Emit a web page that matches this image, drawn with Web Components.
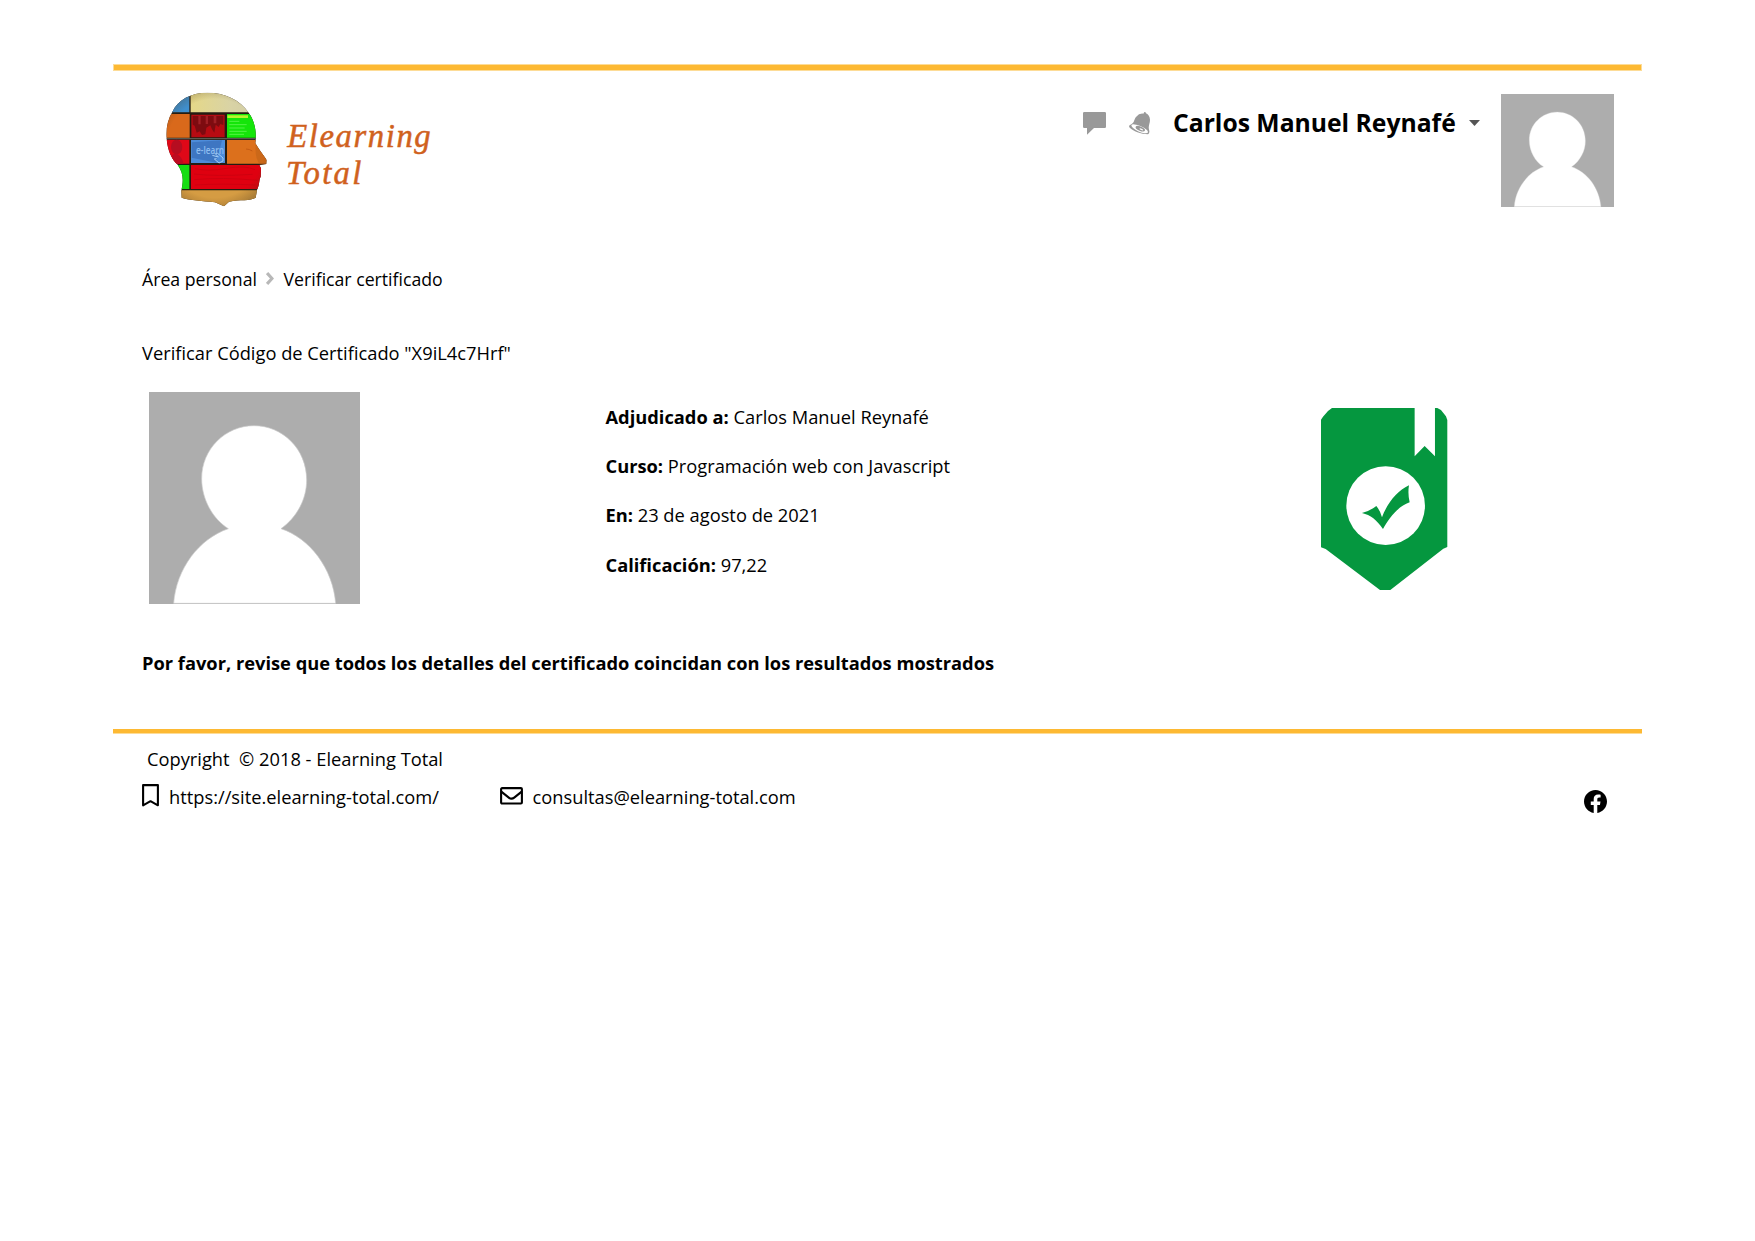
<!DOCTYPE html>
<html lang="es">
<head>
<meta charset="utf-8">
<title>Verificar certificado</title>
<style>
body{margin:0;background:#fff;color:#000;font:18.3px/26px "Open Sans",sans-serif}
</style>
</head>
<body>
<certificate-page></certificate-page>
<script>
function define(name, html){
  const t=document.createElement('template');
  t.innerHTML=html;
  customElements.define(name,class extends HTMLElement{
    constructor(){super();this.attachShadow({mode:'open'}).append(t.content.cloneNode(true));}
  });
}

define('brand-logo',`<style>:host{display:block;width:290px;height:140px}svg{display:block}text{font-family:"Liberation Serif",serif;font-style:italic}</style>
<svg width="290" height="140" viewBox="0 0 870 420">
<defs><clipPath id="h"><path d="M172 38C122 38 84 60 68 94C52 120 47 150 50 178C53 208 62 235 84 256C100 280 101 300 94 332L95 353C120 362 160 362 195 367L222 379L237 365C270 357 300 364 317 353L321 330C330 310 326 300 332 290L333 265L328 256L349 252L350 240C338 222 324 205 316 190C321 150 312 120 296 98C270 60 225 38 172 38Z"/></clipPath>
<radialGradient id="s" gradientUnits="userSpaceOnUse" cx="195" cy="205" r="185"><stop offset=".8" stop-color="#5a3a10" stop-opacity="0"/><stop offset="1" stop-color="#4a3a20" stop-opacity=".3"/></radialGradient>
<linearGradient id="c" x1="0" x2="1"><stop stop-color="#e5d888"/><stop offset=".5" stop-color="#d9d3a5"/><stop offset="1" stop-color="#cdc9a6"/></linearGradient></defs>
<g clip-path="url(#h)">
<path fill="#241c12" d="M40 30H360V390H40z"/>
<path fill="#3f8fce" d="M40 30H118V97H40z"/><path fill="url(#c)" d="M122 30H360V97H122z"/>
<path fill="#d9691b" d="M40 102H119V173H40z"/><path fill="#b70b12" d="M124 104H224V172H124z"/>
<path fill="#7d0b10" d="M128 108H220V135L211 132L206 141L197 134L193 158L186 148L181 136L169 143L166 163L156 165L149 154L140 158L134 137L128 134z"/>
<path fill="#a02025" d="M145 108h7v25h-7zM167 108h7v24h-7zM191 108h8v22h-8z"/>
<path fill="#15e50a" d="M231 102H340V173H231z"/><path fill="#b9f32e" d="M232 106H294V114H232z"/>
<g fill="none" stroke="#55f344" stroke-width="3"><path d="M238 124h30M238 134h52M238 144h46M238 154h52M238 163h44"/></g>
<path fill="#df0818" d="M40 179H118V251H40z"/><ellipse cx="80" cy="201" rx="17" ry="22" fill="#b60d20"/><path fill="#bd0b20" d="M58 251Q60 224 77 220Q94 226 101 251z"/>
<path fill="#4d8cda" d="M123 180H225V249H123z"/><path fill="#3e76c2" d="M125 187L216 181L199 248L125 233z"/>
<path fill="none" stroke="#a4cdf4" stroke-width="3" d="M187 226l18 5-9-10 7-1 16 14v9l-12 6-14-12 7-1"/>
<path fill="#dc701c" d="M231 180H360V251H231z"/><path fill="none" stroke="#c45a13" stroke-width="3" d="M288 207Q298 207 307 213"/><path d="M318 188L358 255H330Q312 230 318 188" fill="#ac5815" opacity=".35"/>
<path fill="#16dd13" d="M40 255H118V327H40z"/><path fill="#df0010" d="M123 255H350V327H123z"/>
<path fill="none" stroke="#cf0010" stroke-width="3" d="M135 266q40 9 95-1t85 4M132 282q66 8 176 1M133 299q80-8 190 2M135 315q80-5 181 0"/>
<path fill="#d59c43" d="M80 331H350V390H80z"/>
<path fill="#5b5a50" d="M40 174h300v4H40z"/>
<path fill="url(#s)" d="M40 30H360V390H40z"/></g>
<text x="138" y="221" fill="#8fbdf0" style="font:600 33px 'Open Sans',sans-serif" textLength="84" lengthAdjust="spacingAndGlyphs">e-learn</text>
<g fill="#d0611d" stroke="#d0611d" stroke-width="1.5" font-size="98"><text x="412" y="200" textLength="430">Elearning</text><text x="408" y="313" textLength="226">Total</text></g>
</svg>`);

define('user-photo',`<style>:host{display:block}svg{display:block;width:100%;height:100%}</style>
<svg viewBox="0 0 633 636" preserveAspectRatio="none"><path fill="#adadad" d="M0 0H633V636H0z"/><path fill="#fff" stroke="#ccc" stroke-width="2" d="M238 410C190 380 158 320 158 260C158 170 230 101 315 101C400 101 473 170 473 264C473 320 445 375 396 410C482 438 552 530 560 634L74 634C82 530 150 440 238 410Z"/></svg>`);

define('user-menu',`<style>:host{display:flex;align-items:flex-start}
svg{display:block}.chat,.bell{margin:18px 23px 0 0}.name{font-size:24.7px;line-height:34px;font-weight:700;white-space:nowrap;margin-top:12.4px;width:283px}.caret{margin:25.5px 21px 0 13px}user-photo{width:113px;height:113px}</style>
<svg class="chat" width="23" height="23" viewBox="0 0 23 23"><path fill="#999" d="M1.2 0H21.8Q23 0 23 1.2V14.8Q23 16 21.8 16H11L4 22.7V16H1.2Q0 16 0 14.8V1.2Q0 0 1.2 0z"/></svg>
<svg class="bell" width="21" height="23" viewBox="0 0 63 69"><path fill="#999" d="M46 0Q51 0 51 4Q62 9 63 23C63 36 56 42 61 57Q62 65 57 67C36 67 12 58 1 46Q-1 41 3 39C17 33 14 24 21 15Q31 3 43 5z"/><ellipse cx="32" cy="50.5" rx="27" ry="8.5" transform="rotate(24 32 50.5)" fill="#fff"/><ellipse cx="34" cy="50" rx="15" ry="6.5" transform="rotate(22 34 50)" fill="#999"/><ellipse cx="37" cy="52" rx="6" ry="2.2" transform="rotate(22 37 52)" fill="#fff"/></svg>
<div class="name"><slot></slot></div>
<svg class="caret" width="11" height="6" viewBox="0 0 11 6"><path fill="#555" d="M0 0H11L5.5 6z"/></svg>
<user-photo></user-photo>`);

define('bread-crumbs',`<style>:host{display:flex;font-size:17.7px}svg{display:block;margin:6.2px 9px 0 9.5px}</style><slot name="root"></slot>
<svg width="8" height="13" viewBox="0 0 8 13"><path fill="none" stroke="#b8b8b8" stroke-width="3.1" d="M1.1 1.1L6 6.5L1.1 11.9"/></svg><span><slot></slot></span>`);

define('detail-row',`<style>:host{display:block;height:49.27px;white-space:nowrap}b{font-weight:700}</style><b><slot name="label"></slot></b> <slot></slot>`);

define('verified-badge',`<style>:host{display:block;width:126.3px;height:182px}svg{display:block}</style>
<svg width="126.3" height="182" viewBox="64 55 379 546"><path fill="#05973f" d="M97 55H345V200L375 169L406 200V55H413L424 61L439 80L443 91V472L431 477L272 601H241L78 478L64 473V90L70 81L85 64z"/><circle cx="258" cy="348" r="118" fill="#fff"/><path fill="#05973f" d="M187 370Q211 364 230 349Q242 363 247 383C262 342 292 304 328 287Q324 313 330 338C292 352 267 387 250 418C231 391 213 376 187 370z"/></svg>`);

define('site-footer',`<style>:host{display:block}.copy{white-space:pre;padding:12.2px 0 0 34px}.row{display:flex;align-items:flex-start;padding:12px 35px 0 29px}svg{display:block;flex:none}.bm{margin:-.2px 10px 0 0}.site{width:331px}.mail{margin:2.6px 9.5px 0 0}.fb{margin:5.5px 0 0 auto}</style>
<div class="copy">Copyright  © 2018 - Elearning Total</div>
<div class="row"><svg class="bm" width="17" height="23" viewBox="0 0 17 23"><path fill="none" stroke="#000" stroke-width="2.1" stroke-linejoin="round" d="M1.1 1.1H15.9V21.3L8.5 17.2L1.1 21.3z"/></svg>
<div class="site"><slot name="site"></slot></div>
<svg class="mail" width="23" height="18" viewBox="0 0 23 18"><rect x="1.1" y="1.1" width="20.8" height="15.4" rx="1" fill="none" stroke="#000" stroke-width="2.1"/><path fill="none" stroke="#000" stroke-width="2.1" d="M1.3 4.7L8.8 10.6Q11.5 12.8 14.2 10.6L21.7 4.7"/></svg>
<div><slot name="mail"></slot></div>
<svg class="fb" width="23" height="23" viewBox="0 0 24 24"><path d="M24 12.07C24 5.4 18.63 0 12 0S0 5.4 0 12.07C0 18.1 4.39 23.1 10.13 24v-8.44H7.08v-3.49h3.05V9.41c0-3.02 1.79-4.69 4.53-4.69 1.31 0 2.68.24 2.68.24v2.97h-1.51c-1.49 0-1.96.93-1.96 1.89v2.25h3.33l-.53 3.49h-2.8V24C19.61 23.1 24 18.1 24 12.07z"/></svg></div>`);

define('certificate-page',`<style>:host{display:block;width:1529px;padding:64px 0 0 113px}
.rule{background:#fdb933;border:1px solid #fddc97;box-sizing:border-box}.top{height:7px}.bottom{height:5px;border-width:0 0 1px;margin-top:52.6px}
header{display:flex;justify-content:space-between;align-items:flex-start;height:195px;box-sizing:border-box;padding:9px 28px 0 37px}
user-menu{margin-top:14px}
main{display:block;padding:0 29px}h1{font:inherit;margin:48px 0 26px}
.cert{display:flex;height:212px;padding-left:7px}.cert user-photo{width:211px;height:212px}.details{margin:11.8px 0 0 245.5px;width:715.8px}verified-badge{margin-top:16.3px}
.note{font-weight:700;margin:46.4px 0 0}</style>
<div class="rule top"></div>
<header><brand-logo></brand-logo><user-menu>Carlos Manuel Reynafé</user-menu></header>
<main><bread-crumbs><span slot="root">Área personal</span>Verificar certificado</bread-crumbs>
<h1>Verificar Código de Certificado "X9iL4c7Hrf"</h1>
<section class="cert"><user-photo></user-photo><div class="details">
<detail-row><span slot="label">Adjudicado a:</span>Carlos Manuel Reynafé</detail-row>
<detail-row><span slot="label">Curso:</span>Programación web con Javascript</detail-row>
<detail-row><span slot="label">En:</span>23 de agosto de 2021</detail-row>
<detail-row><span slot="label">Calificación:</span>97,22</detail-row></div><verified-badge></verified-badge></section>
<p class="note">Por favor, revise que todos los detalles del certificado coincidan con los resultados mostrados</p></main>
<div class="rule bottom"></div>
<site-footer><span slot="site">https://site.elearning-total.com/</span><span slot="mail">consultas@elearning-total.com</span></site-footer>`);
</script>
</body>
</html>
